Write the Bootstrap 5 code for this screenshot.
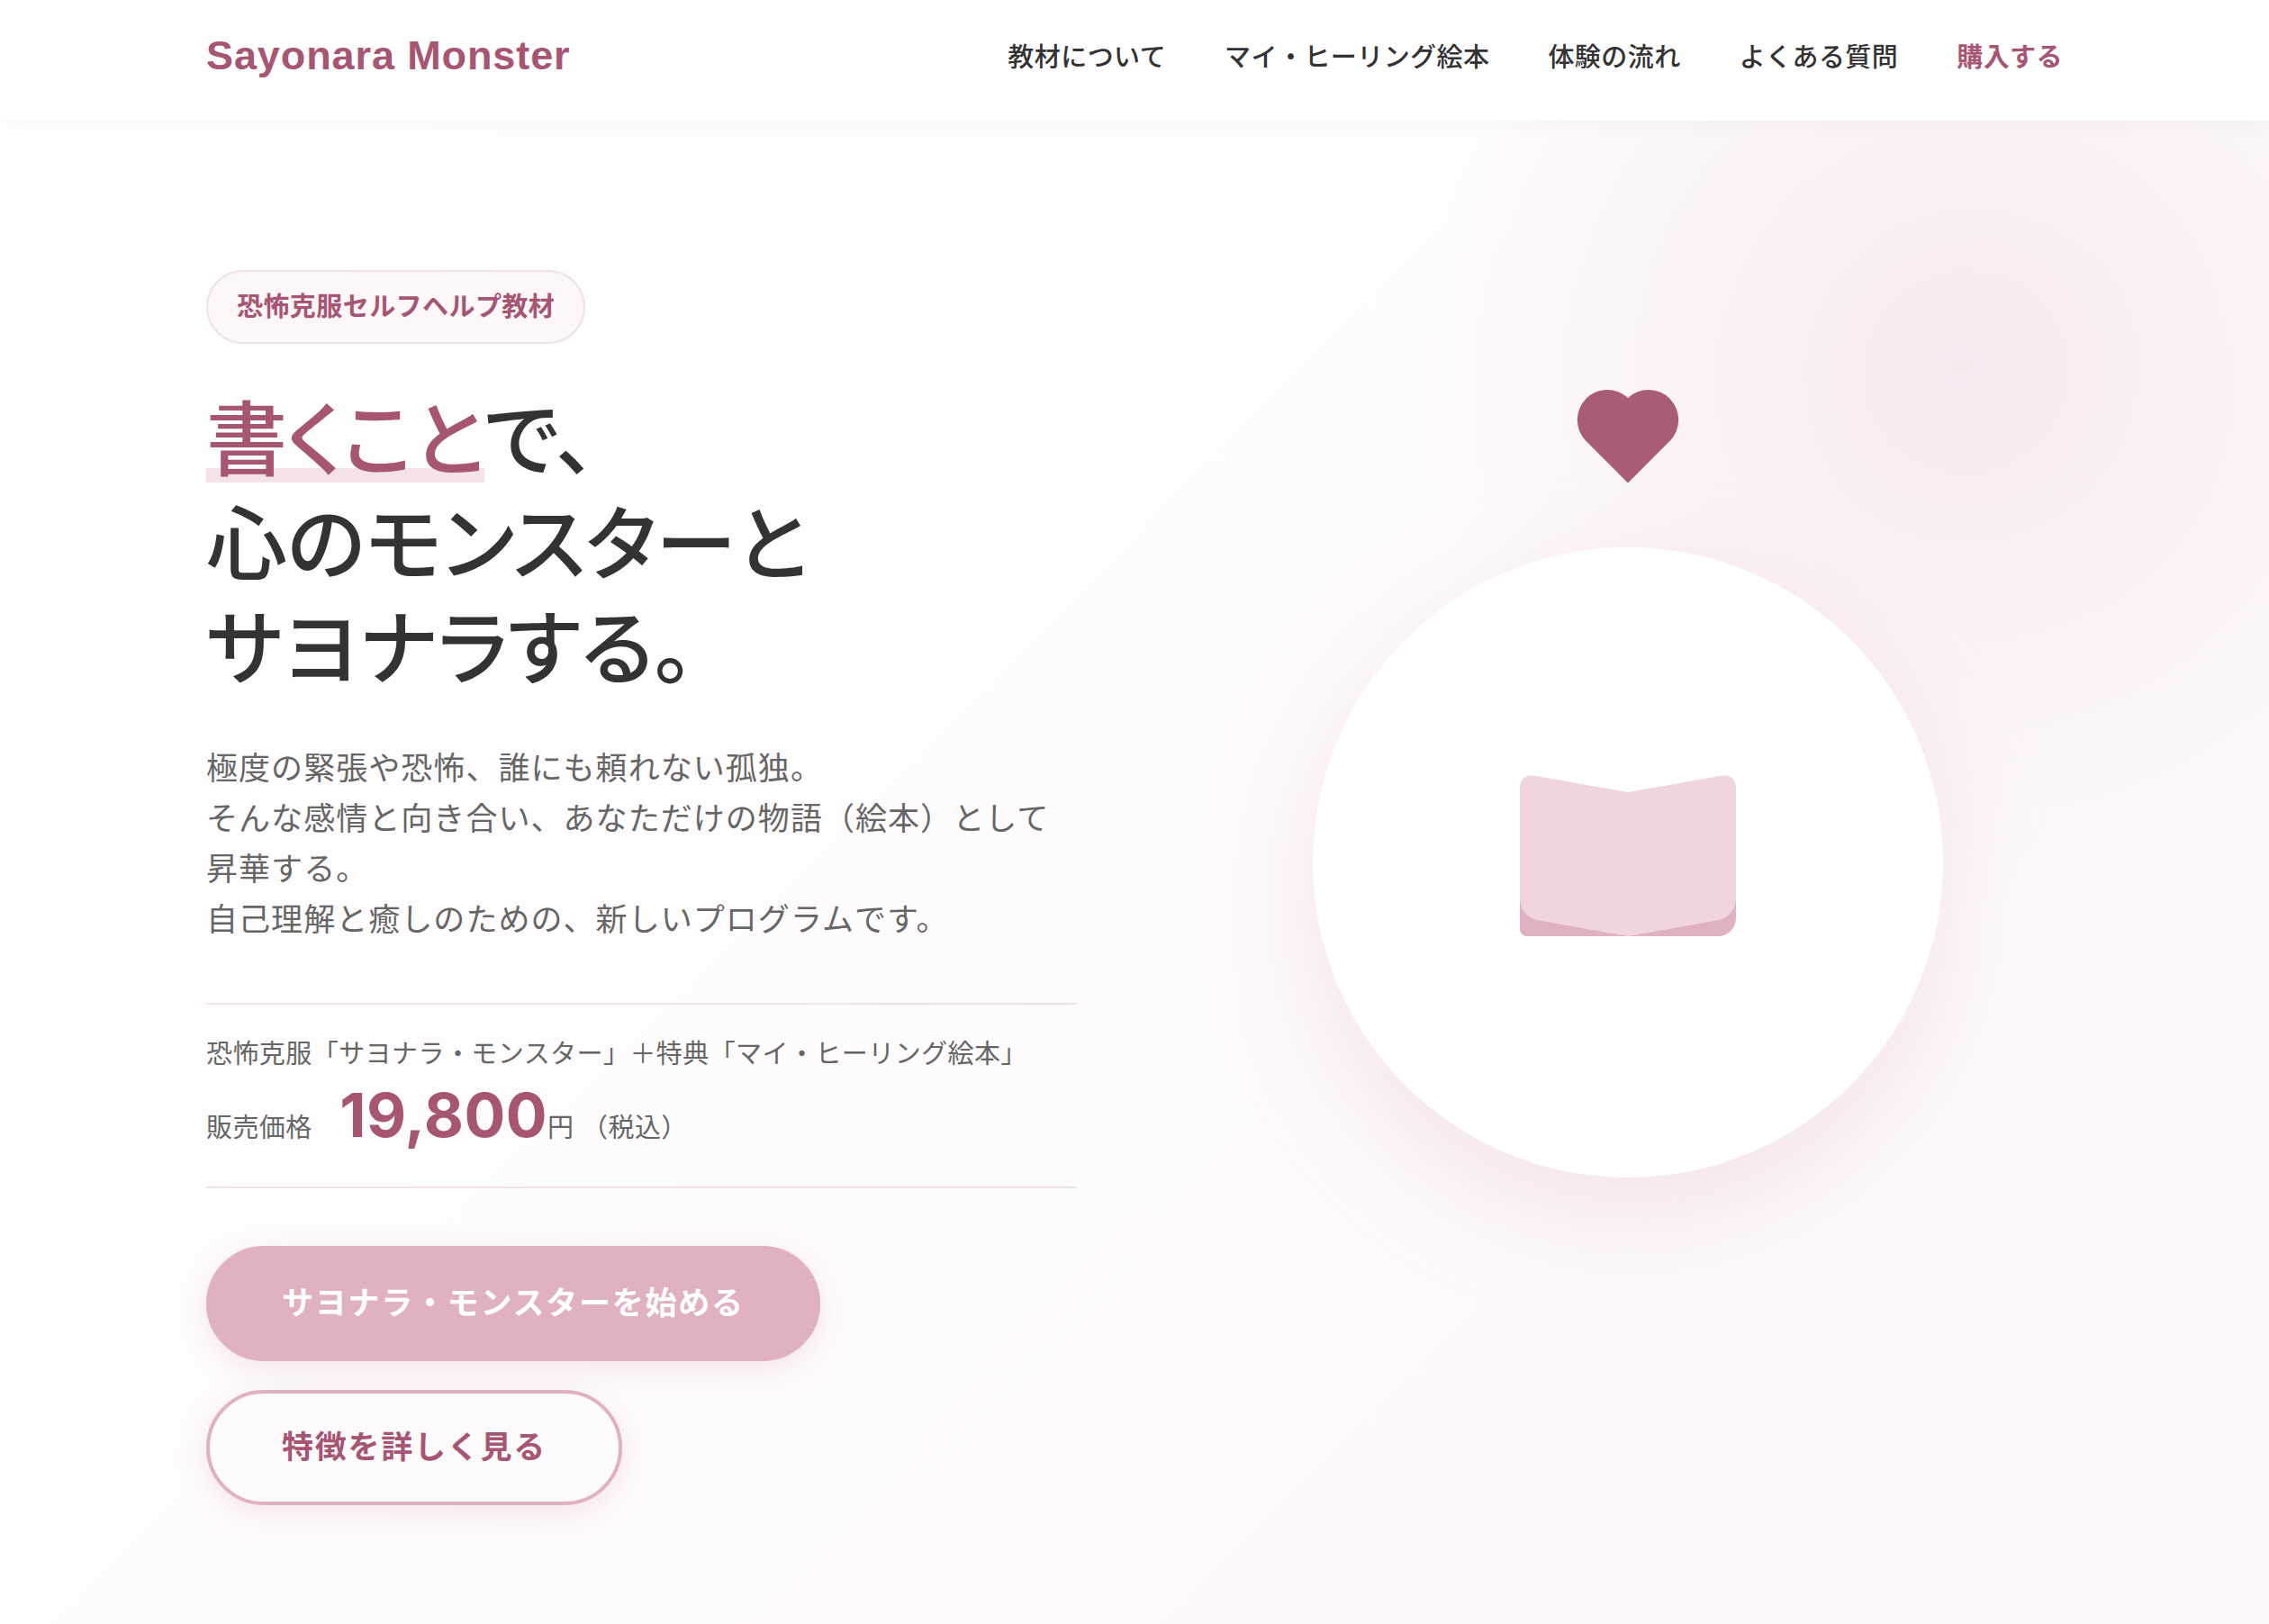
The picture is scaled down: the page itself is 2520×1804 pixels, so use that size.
<!DOCTYPE html>
<html lang="ja">
<head>
<meta charset="utf-8">
<meta name="viewport" content="width=device-width, initial-scale=1">
<title>Sayonara Monster</title>
<link rel="stylesheet" href="https://cdn.jsdelivr.net/npm/bootstrap@5.3.0/dist/css/bootstrap.min.css">
<style>
:root { --rose: #a65672; --pink: #e0b1c1; --line: #ede3e7; --ink: #333; --soft: #666; }
body {
  font-family: "Liberation Sans", "Noto Sans CJK JP", sans-serif;
  font-size: 29px; line-height: 46px; color: var(--ink);
  background:
    radial-gradient(circle 600px at calc(100% - 340px) 408px, rgba(238,206,222,.38), rgba(238,206,222,0)),
    linear-gradient(135deg, #fff 0%, #fdf8fa 100%) no-repeat;
  min-height: 100vh; overflow-x: hidden;
}
.wrap { width: 100%; max-width: 2062px; margin: 0 auto; }
.site-head { background: rgba(255,255,255,.95); box-shadow: 0 4px 20px rgba(0,0,0,.03); padding: 28px 0 34px; }
.logo { font-size: 45px; line-height: 68px; padding-bottom: 4px; letter-spacing: .02em; }
.rose, .rose:hover { color: var(--rose); }
.menu { gap: 65px; letter-spacing: .015em; }
.menu a { text-decoration: none; font-weight: 500; color: var(--ink); }
.menu a.rose { font-weight: 700; color: var(--rose); }
.hero { padding: 166px 0 128px; }
.cols { --bs-gutter-x: 128px; }
.tagline { border: 2px solid var(--line); background: #fdf7f9; padding: 16px 32px; letter-spacing: .015em; margin-bottom: 50px; }
.headline { font-size: 90px; line-height: 116px; font-weight: 500; font-feature-settings: "palt"; margin-bottom: 46px; }
.headline span { display: inline-block; background: linear-gradient(#f4e2ea, #f4e2ea) 0 88px / 100% 16px no-repeat; }
.intro { font-size: 35px; line-height: 56px; letter-spacing: .03em; color: var(--soft); margin-bottom: 64px; }
.price { border: solid var(--line); border-width: 2px 0; padding: 32px 0 36px; letter-spacing: .015em; color: var(--soft); margin-bottom: 64px; }
.price strong { font-family: Inter, "Liberation Sans", sans-serif; font-size: 68px; line-height: 88px; margin-left: 22px; }
.actions { gap: 32px; }
.cta { font-size: 35px; line-height: 56px; letter-spacing: .05em; font-weight: 700; padding: 32px 80px; border: 4px solid var(--pink); border-radius: 64px; box-shadow: 0 8px 30px rgba(224,177,193,.3); }
.cta-main, .cta-main:hover { background: var(--pink); color: #fff; }
.cta-line, .cta-line:hover { background: #fefbfc; color: var(--rose); border-color: var(--pink); }
.art { padding-bottom: 56px; }
.disc { width: 700px; height: 700px; background: #fff; box-shadow: 0 40px 120px rgba(224,177,193,.3); }
.heart { left: 50%; top: -176px; margin-left: -57px; }
</style>
<script src="https://cdn.jsdelivr.net/npm/bootstrap@5.3.0/dist/js/bootstrap.bundle.min.js"></script>
</head>
<body>
<header class="site-head">
  <div class="wrap d-flex justify-content-between align-items-center">
    <a class="logo rose fw-bold text-decoration-none" href="#">Sayonara Monster</a>
    <nav class="menu d-flex">
      <a href="#about">教材について</a>
      <a href="#book">マイ・ヒーリング絵本</a>
      <a href="#flow">体験の流れ</a>
      <a href="#faq">よくある質問</a>
      <a class="rose" href="#buy">購入する</a>
    </nav>
  </div>
</header>
<main class="hero">
  <div class="wrap">
    <div class="row cols align-items-center">
      <div class="col-6">
        <div class="tagline rose fw-bold rounded-pill d-table">恐怖克服セルフヘルプ教材</div>
        <h1 class="headline"><span class="rose">書くこと</span>で、<br>心のモンスターと<br>サヨナラする。</h1>
        <p class="intro">極度の緊張や恐怖、誰にも頼れない孤独。<br>そんな感情と向き合い、あなただけの物語（絵本）として昇華する。<br>自己理解と癒しのための、新しいプログラムです。</p>
        <div class="price">
          <div>恐怖克服「サヨナラ・モンスター」＋特典「マイ・ヒーリング絵本」</div>
          <div>販売価格 <strong class="rose">19,800</strong>円 （税込）</div>
        </div>
        <div class="actions d-flex flex-column align-items-start">
          <button type="button" class="btn cta cta-main">サヨナラ・モンスターを始める</button>
          <button type="button" class="btn cta cta-line">特徴を詳しく見る</button>
        </div>
      </div>
      <div class="col-6 art d-flex justify-content-center">
        <div class="disc rounded-circle position-relative d-flex align-items-center justify-content-center">
          <svg class="heart position-absolute" width="114" height="105" viewBox="0 0 114 105" aria-hidden="true">
            <path fill="#a85c78" d="M57 104.500 9.600 57A33.400 33.400 0 0 1 57 10 33.400 33.400 0 0 1 104.400 57Z"/>
          </svg>
          <svg width="240" height="196" viewBox="0 0 240 196" aria-hidden="true">
            <path fill="#e0b1c1" d="M0 100H240V160A20 20 0 0 1 220 180H8A8 8 0 0 1 0 172Z"/>
            <g fill="#f0d4df">
              <path transform="translate(120 20) skewY(10)" d="M0.500 0H-104A16 16 0 0 0 -120 16V140A20 20 0 0 0 -100 160H0.500Z"/>
              <path transform="translate(120 20) skewY(-10)" d="M0 0H104A16 16 0 0 1 120 16V140A20 20 0 0 1 100 160H0Z"/>
            </g>
          </svg>
        </div>
      </div>
    </div>
  </div>
</main>
</body>
</html>
